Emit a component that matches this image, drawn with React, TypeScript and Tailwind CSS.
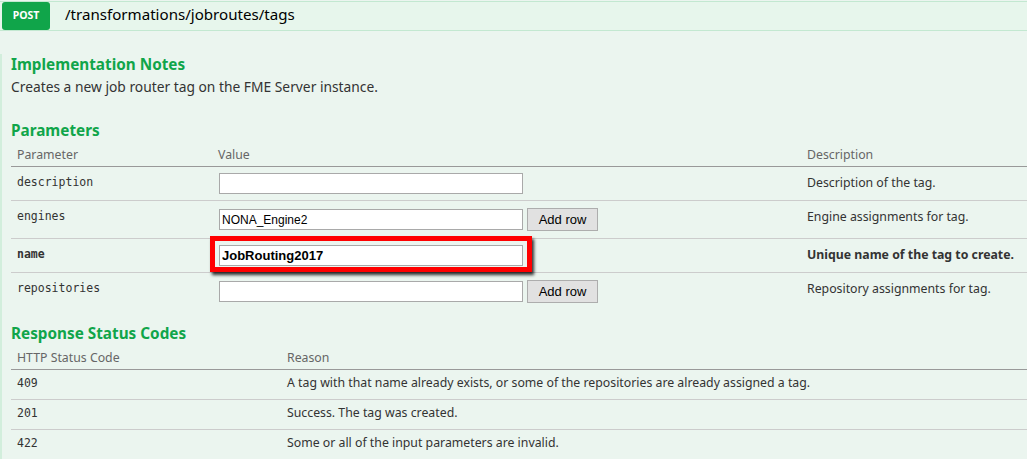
import React from 'react';

const params = [
  { name: 'description', value: '', desc: 'Description of the tag.', addRow: false, hi: false },
  { name: 'engines', value: 'NONA_Engine2', desc: 'Engine assignments for tag.', addRow: true, hi: false },
  { name: 'name', value: 'JobRouting2017', desc: 'Unique name of the tag to create.', addRow: false, hi: true },
  { name: 'repositories', value: '', desc: 'Repository assignments for tag.', addRow: true, hi: false },
];

const codes = [
  { code: '409', reason: 'A tag with that name already exists, or some of the repositories are already assigned a tag.' },
  { code: '201', reason: 'Success. The tag was created.' },
  { code: '422', reason: 'Some or all of the input parameters are invalid.' },
];

export default function App() {
  return (
    <div className="w-[1027px] h-[459px] overflow-hidden bg-[#ebf5ef] font-['Noto_Sans',sans-serif] text-[#333]">
      {/* Operation header */}
      <div className="mt-px h-[30px] flex items-stretch border-y border-[#c3e8d1] bg-[#e7f6ec] pl-[2px]">
        <div className="w-[48px] rounded-[3px] bg-[#10a54a] text-white text-[10.5px] font-bold flex items-center justify-center">
          POST
        </div>
        <div className="ml-[15px] flex items-center text-[15.1px] text-black leading-none pb-[2px]">
          /transformations/jobroutes/tags
        </div>
      </div>

      <div className="border-l-2 border-[#d2eedc] pl-[9px] h-full">
        <h4 className="mt-[23px] text-[15.3px] leading-[20px] font-bold text-[#10a54a]">Implementation Notes</h4>
        <p className="mt-[4px] text-[13.8px] leading-[18px]">Creates a new job router tag on the FME Server instance.</p>

        <h4 className="mt-[24px] text-[15.3px] leading-[20px] font-bold text-[#10a54a]">Parameters</h4>
        <div className="text-[12.3px]">
          <div className="grid grid-cols-[201px_589px_1fr] h-[27px] border-b border-[#999] text-[#666] leading-[18px] pt-[6px]">
            <div className="pl-[6px]">Parameter</div>
            <div className="pl-[6px]">Value</div>
            <div className="pl-[6px]">Description</div>
          </div>
          {params.map((p, i) => (
            <div
              key={p.name}
              className={`grid grid-cols-[201px_589px_1fr] ${i < params.length - 1 ? 'border-b border-[#ccc]' : ''} ${p.addRow ? 'py-[7px]' : 'py-[6px]'}`}
            >
              <div className={`pl-[6px] font-['DejaVu_Sans_Mono',monospace] text-[11.5px] leading-[16px] ${p.addRow ? 'pt-0' : 'pt-px'} ${p.hi ? 'font-bold' : ''}`}>
                {p.name}
              </div>
              <div className="pl-[7px] flex items-center gap-[4px]">
                <div className="relative">
                  <input
                    readOnly
                    value={p.value}
                    className={`w-[304px] h-[21px] border border-[#a9a9a9] bg-white px-[2px] text-black font-['Liberation_Sans',sans-serif] outline-none ${p.hi ? 'font-bold text-[13px]' : 'text-[12px]'}`}
                  />
                  {p.hi && (
                    <div className="absolute -left-[9px] -top-[9px] -right-[9px] -bottom-[6px] border-[5px] border-[#f00] shadow-[2px_3px_3px_rgba(0,0,0,0.8)] pointer-events-none" />
                  )}
                </div>
                {p.addRow && (
                  <button className="h-[23px] w-[71px] border border-[#adadad] bg-[#e1e1e1] text-[13px] text-black font-['Liberation_Sans',sans-serif]">
                    Add row
                  </button>
                )}
              </div>
              <div className={`pl-[6px] leading-[18px] ${p.addRow ? 'pt-0' : 'pt-px'} ${p.hi ? 'font-bold' : ''}`}>{p.desc}</div>
            </div>
          ))}
        </div>

        <h4 className="mt-[13px] text-[15.3px] leading-[20px] font-bold text-[#10a54a]">Response Status Codes</h4>
        <div className="text-[12.3px]">
          <div className="grid grid-cols-[270px_1fr] h-[27px] border-b border-[#999] text-[#666] leading-[18px] pt-[6px]">
            <div className="pl-[6px]">HTTP Status Code</div>
            <div className="pl-[6px]">Reason</div>
          </div>
          {codes.map((c) => (
            <div key={c.code} className="grid grid-cols-[270px_1fr] h-[30px] border-b border-[#ccc] pt-[4px] leading-[18px]">
              <div className="pl-[6px] font-['DejaVu_Sans_Mono',monospace] text-[11.5px]">{c.code}</div>
              <div className="pl-[6px]">{c.reason}</div>
            </div>
          ))}
        </div>
      </div>
    </div>
  );
}
